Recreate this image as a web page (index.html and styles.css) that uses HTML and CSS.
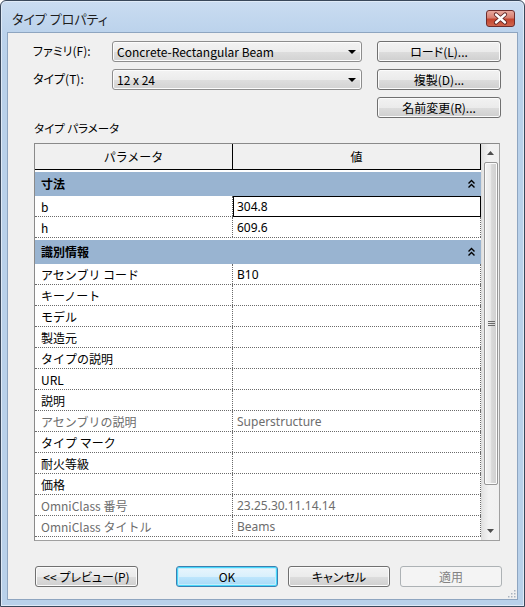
FILE: index.html
```html
<!DOCTYPE html>
<html lang="ja">
<head>
<meta charset="utf-8">
<title>タイプ プロパティ</title>
<link rel="stylesheet" href="styles.css">
</head>
<body>
<div class="window">
  <div class="titlebar">
    <span class="title">タイプ プロパティ</span>
    <span class="close">
      <svg width="29" height="17" viewBox="0 0 29 17">
        <path d="M10 4.5 L19 12.5 M19 4.5 L10 12.5" stroke="#5a2020" stroke-width="4.2" stroke-linecap="round"/>
        <path d="M10 4.5 L19 12.5 M19 4.5 L10 12.5" stroke="#ffffff" stroke-width="2.4" stroke-linecap="round"/>
      </svg>
    </span>
  </div>
  <div class="client">
    <div class="form">
      <span class="label">ファミリ(F):</span>
      <div class="combo"><span>Concrete-Rectangular Beam</span><i class="arrow"></i></div>
      <span></span>
      <div class="btn">ロード(L)...</div>

      <span class="label">タイプ(T):</span>
      <div class="combo"><span>12 x 24</span><i class="arrow"></i></div>
      <span></span>
      <div class="btn">複製(D)...</div>

      <span></span><span></span><span></span>
      <div class="btn">名前変更(R)...</div>
    </div>

    <div class="section-label">タイプ パラメータ</div>

    <div class="table">
      <div class="grid">
        <div class="head">
          <div class="hc c1">パラメータ</div>
          <div class="hc c2">値</div>
        </div>
        <div class="gap"></div>
        <div class="group"><span>寸法</span><svg class="chev" width="7" height="10" viewBox="0 0 7 10"><path d="M0.5 4.5 L3.5 1.5 L6.5 4.5 M0.5 8.5 L3.5 5.5 L6.5 8.5" fill="none" stroke="#000" stroke-width="1.4"/></svg></div>
        <div class="row"><div class="c1">b</div><div class="c2 edit">304.8</div></div>
        <div class="row"><div class="c1">h</div><div class="c2">609.6</div></div>
        <div class="gap"></div>
        <div class="group"><span>識別情報</span><svg class="chev" width="7" height="10" viewBox="0 0 7 10"><path d="M0.5 4.5 L3.5 1.5 L6.5 4.5 M0.5 8.5 L3.5 5.5 L6.5 8.5" fill="none" stroke="#000" stroke-width="1.4"/></svg></div>
        <div class="row"><div class="c1">アセンブリ コード</div><div class="c2">B10</div></div>
        <div class="row"><div class="c1">キーノート</div><div class="c2"></div></div>
        <div class="row"><div class="c1">モデル</div><div class="c2"></div></div>
        <div class="row"><div class="c1">製造元</div><div class="c2"></div></div>
        <div class="row"><div class="c1">タイプの説明</div><div class="c2"></div></div>
        <div class="row"><div class="c1">URL</div><div class="c2"></div></div>
        <div class="row"><div class="c1">説明</div><div class="c2"></div></div>
        <div class="row ro"><div class="c1">アセンブリの説明</div><div class="c2">Superstructure</div></div>
        <div class="row"><div class="c1">タイプ マーク</div><div class="c2"></div></div>
        <div class="row"><div class="c1">耐火等級</div><div class="c2"></div></div>
        <div class="row"><div class="c1">価格</div><div class="c2"></div></div>
        <div class="row ro"><div class="c1">OmniClass 番号</div><div class="c2">23.25.30.11.14.14</div></div>
        <div class="row ro"><div class="c1">OmniClass タイトル</div><div class="c2">Beams</div></div>
      </div>
      <div class="scrollbar">
        <div class="sb-arrow"><svg width="7" height="4" viewBox="0 0 7 4"><path d="M0 4 L3.5 0 L7 4 Z" fill="#4d4d4d"/></svg></div>
        <div class="thumb"><svg width="7" height="6" viewBox="0 0 7 6"><path d="M0 0.5 H7 M0 2.5 H7 M0 4.5 H7" stroke="#6a6a6a" stroke-width="1"/></svg></div>
        <div class="sb-track"></div>
        <div class="sb-arrow"><svg width="7" height="4" viewBox="0 0 7 4"><path d="M0 0 L3.5 4 L7 0 Z" fill="#4d4d4d"/></svg></div>
      </div>
    </div>

    <div class="footer">
      <div class="btn fbtn preview">&lt;&lt; プレビュー(P)</div>
      <div class="btn fbtn ok">OK</div>
      <div class="btn fbtn">キャンセル</div>
      <div class="btn fbtn disabled">適用</div>
    </div>
    <div class="grip">
      <svg width="10" height="10" viewBox="0 0 10 10"><g fill="#a9b3bf"><rect x="8" y="2" width="1.5" height="1.5"/><rect x="5" y="5" width="1.5" height="1.5"/><rect x="8" y="5" width="1.5" height="1.5"/><rect x="2" y="8" width="1.5" height="1.5"/><rect x="5" y="8" width="1.5" height="1.5"/><rect x="8" y="8" width="1.5" height="1.5"/></g></svg>
    </div>
  </div>
</div>
</body>
</html>
```

FILE: styles.css
```css
* { box-sizing: border-box; }
html, body { margin: 0; padding: 0; background: #ffffff; }
body {
  font-family: "Noto Sans CJK JP", sans-serif;
  font-size: 12px;
  color: #000;
}
.window {
  width: 525px;
  height: 607px;
  border: 1px solid #39475a;
  border-radius: 6px 6px 0 0;
  background: linear-gradient(#cadcf1 0px, #bcd3ec 30px, #b9d1ea 60px);
  display: flex;
  flex-direction: column;
  box-shadow: inset 0 0 0 1px #dfeaf7;
}
.titlebar {
  height: 31px;
  flex: none;
  display: flex;
  justify-content: space-between;
  align-items: flex-start;
  padding: 0 9px 0 11px;
}
.title {
  font-size: 13px;
  line-height: 16px;
  margin-top: 10px;
  font-feature-settings: "palt";
  color: #1e1e1e;
}
.close {
  margin-top: 9px;
  width: 29px;
  height: 17px;
  border: 1px solid #6e2c2c;
  border-radius: 3px;
  background: linear-gradient(#e8a89d 0%, #d77f71 45%, #c4452f 55%, #d0664e 100%);
  display: flex;
}
.close svg { display: block; margin: -1px; }
.client {
  flex: 1;
  margin: 0 6px 6px 6px;
  background: #f0f0f0;
  border: 1px solid #8ea5c0;
  display: flex;
  flex-direction: column;
  position: relative;
}
.form {
  display: grid;
  grid-template-columns: 79px 250px 15px 124px;
  grid-auto-rows: 21px;
  row-gap: 7px;
  padding: 8px 0 0 25px;
  align-items: center;
}
.label {
  font-feature-settings: "palt";
  font-size: 12px;
  padding-bottom: 2px;
}
.combo {
  height: 21px;
  border: 1px solid #8d8d8d;
  border-radius: 3px;
  background: linear-gradient(#f3f3f3 0%, #ececec 50%, #dedede 51%, #d2d2d2 100%);
  display: flex;
  align-items: center;
  justify-content: space-between;
  padding: 0 5px 1px 4px;
  box-shadow: inset 0 0 0 1px #fcfcfc;
}
.arrow {
  width: 0;
  height: 0;
  border-left: 4px solid transparent;
  border-right: 4px solid transparent;
  border-top: 4px solid #000;
  margin-top: 2px;
}
.btn {
  height: 21px;
  border: 1px solid #707070;
  border-radius: 3px;
  background: linear-gradient(#f2f2f2 0%, #ebebeb 50%, #dddddd 51%, #cfcfcf 100%);
  box-shadow: inset 0 0 0 1px #fbfbfb;
  display: flex;
  align-items: center;
  justify-content: center;
  font-feature-settings: "palt";
  padding-bottom: 1px;
}
.section-label {
  margin: 2px 0 0 26px;
  height: 17px;
  line-height: 17px;
  font-feature-settings: "palt";
  font-size: 11.5px;
}
.table {
  margin: 6px 0 0 26px;
  width: 466px;
  height: 398px;
  border: 1px solid #a0a0a0;
  border-left-color: #8a8a8a;
  border-top-color: #8a8a8a;
  background: #ffffff;
  display: flex;
  overflow: hidden;
}
.grid {
  width: 446px;
  flex: none;
  display: flex;
  flex-direction: column;
}
.head {
  height: 26px;
  display: flex;
  background: #f0f0f0;
  border-bottom: 1px solid #000;
}
.hc {
  display: flex;
  align-items: center;
  justify-content: center;
  font-size: 12px;
  border-right: 1px solid #000;
}
.c1 { width: 198px; flex: none; }
.c2 { flex: 1; }
.gap { height: 2px; background: #ffffff; }
.group {
  height: 24px;
  background: #99b4d1;
  display: flex;
  align-items: center;
  justify-content: space-between;
  padding: 0 6px 1px 6px;
  font-weight: bold;
  font-size: 12px;
}
.chev { display: block; margin-top: 1px; }
.row {
  height: 21px;
  display: flex;
  border-bottom: 1px dotted #6a6a6a;
}
.row .c1 {
  border-right: 1px dotted #6a6a6a;
  padding: 0 0 0 6px;
  display: flex;
  align-items: center;
}
.row .c2 {
  border-right: 1px dotted #6a6a6a;
  padding: 0 0 0 4px;
  display: flex;
  align-items: center;
  font-family: "Noto Sans", "Noto Sans CJK JP", sans-serif;
}
.row .c2.edit {
  border: 1px solid #000;
  margin-bottom: -1px;
  padding-left: 3px;
  height: 21px;
}
.row.ro { color: #6d6d6d; }
.scrollbar {
  flex: 1;
  display: flex;
  flex-direction: column;
  background: linear-gradient(90deg, #e3e3e3, #f2f2f2 40%, #f0f0f0);
  border-left: 1px solid #dcdcdc;
  padding: 0 1px 0 1px;
}
.sb-arrow {
  height: 18px;
  flex: none;
  display: flex;
  align-items: center;
  justify-content: center;
}
.thumb {
  height: 323px;
  flex: none;
  margin: 0 0 0 1px;
  border: 1px solid #979797;
  border-radius: 2px;
  background: linear-gradient(90deg, #f4f4f4 0%, #eaeaea 45%, #d9d9d9 55%, #cfcfcf 100%);
  display: flex;
  align-items: center;
  justify-content: center;
  box-shadow: inset 0 0 0 1px #fbfbfb;
}
.sb-track { flex: 1; }
.footer {
  display: flex;
  margin: 25px 0 0 27px;
  gap: 10px;
}
.fbtn { width: 102px; font-size: 12px; }
.preview { width: 103px; margin-right: 28px; }
.ok {
  border-color: #3c7fb1;
  box-shadow: inset 0 0 0 1px #48d8fb, inset 0 0 0 2px #c4edfc;
  background: linear-gradient(#eaf6fd 0%, #d9f0fc 50%, #bee6fd 51%, #a7d9f5 100%);
}
.disabled {
  border-color: #adb2b5;
  background: #f4f4f4;
  color: #838383;
  box-shadow: none;
}
.grip {
  position: absolute;
  right: 1px;
  bottom: 1px;
  width: 10px;
  height: 10px;
}
.grip svg { display: block; }
```
